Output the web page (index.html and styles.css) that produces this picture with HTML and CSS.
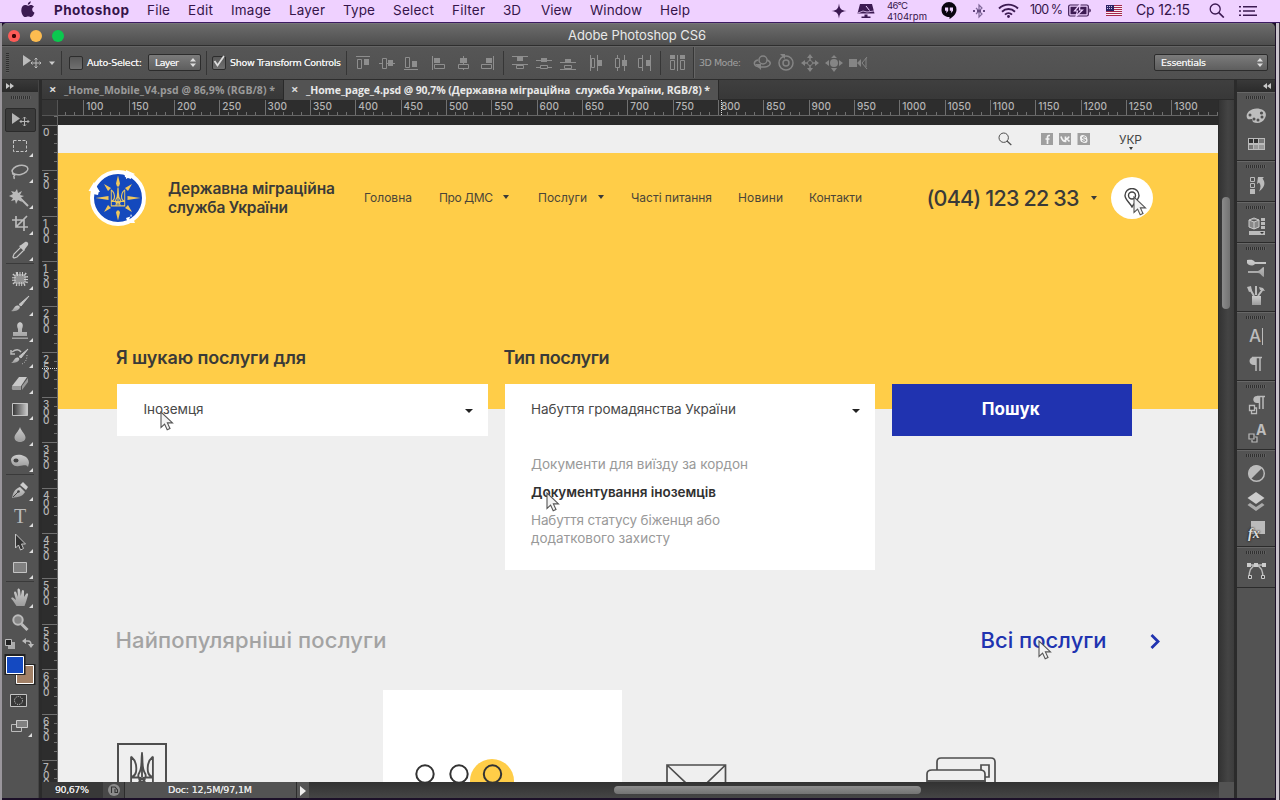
FILE: index.html
```html
<!DOCTYPE html>
<html lang="uk">
<head>
<meta charset="utf-8">
<title>Adobe Photoshop CS6</title>
<link rel="stylesheet" href="styles.css">
</head>
<body>
<svg class="defs" width="0" height="0">
  <defs>
    <linearGradient id="metal" x1="0" y1="0" x2="0" y2="1"><stop offset="0" stop-color="#cdcdcd"/><stop offset="1" stop-color="#9c9c9c"/></linearGradient>
    <linearGradient id="fade" x1="0" y1="0" x2="1" y2="0"><stop offset="0" stop-color="#333"/><stop offset="1" stop-color="#ccc"/></linearGradient>
    <symbol id="pointer" viewBox="0 0 14 20"><path d="M1 1v15.500l3.600-3.400 2.600 5.600 2.800-1.200-2.600-5.600h5.100z" fill="#f3f3f3" stroke="#555" stroke-width="1.100"/></symbol>
    <symbol id="more" viewBox="0 0 4 4"><path d="M4 0v4H0z" fill="#ddd"/></symbol>
    <symbol id="trident" viewBox="0 0 22 30">
      <path d="M11 1v20M1 4.500v23.500h20V4.500M1 4.500c4 3 5.500 7 4.500 12.500-.4 2-1.500 3-3.500 4M21 4.500c-4 3-5.500 7-4.500 12.500.4 2 1.500 3 3.500 4M11 2c-1 8 .5 12-3 16.500-1 2 0 5 3 7 3-2 4-5 3-7C10.500 14 12 10 11 2M1 21.500h6c4 0 7 2 7 6M21 21.500h-6c-4 0-7 2-7 6" fill="none" stroke="currentColor" stroke-width="1.700"/>
    </symbol>
  </defs>
</svg>

<nav class="menubar">
  <svg class="apple" width="14" height="17" viewBox="0 0 14 17"><path d="M9.800.300c.1 1.700-1.400 3.500-3 3.500-.2-1.700 1.400-3.300 3-3.500zM7 4.800c.7 0 1.600-.8 3-.8 1 0 2.200.5 3 1.600-2.600 1.600-2.200 5 .5 6.100-.5 1.400-1.800 4.300-3.500 4.300-1 0-1.500-.6-2.800-.6s-1.800.6-2.800.6C2 16 .3 12.300.3 9.200.3 6 2.300 4.100 4.200 4.100c1.200 0 2.100.7 2.800.7z"/></svg>
  <b data-w="75">Photoshop</b><span data-w="23">File</span><span data-w="25">Edit</span><span data-w="40">Image</span><span data-w="36">Layer</span><span data-w="32">Type</span><span data-w="41">Select</span><span data-w="33">Filter</span><span data-w="18">3D</span><span data-w="31">View</span><span data-w="52">Window</span><span data-w="30">Help</span>
  <svg width="16" height="16" viewBox="0 0 16 16"><path d="M8 .5C8.800 6 10 7.200 15.500 8 10 8.800 8.800 10 8 15.500 7.200 10 6 8.800.5 8 6 7.200 7.200 6 8 .5z"/></svg>
  <svg width="18" height="16" viewBox="0 0 18 16"><path d="M3 1h12l2.500 9.500H.5zM7.500 11.500h3v2h3V15h-9v-1.500h3z"/><path d="M9 3l3.500 4.500" stroke="#efd1ff"/><path d="M1 10l5-2 4 1 7-1" fill="none" stroke="#efd1ff" stroke-width=".8"/></svg>
  <div class="temp"><span data-w="21">46°C</span><span data-w="40">4104rpm</span></div>
  <svg width="16" height="19" viewBox="0 0 16 19"><path fill="#0a0510" d="M8 1a7.500 7.500 0 0 1 7.500 7.700c0 4-3.500 7.300-7 9.300v-2C3.500 16 .5 13 .5 8.700A7.500 7.500 0 0 1 8 1z"/><path fill="#efd1ff" d="M4 6.500h3.200v3.200L5.800 11.500H5l.7-1.700H4zM8.800 6.500H12v3.200l-1.400 1.800h-.8l.7-1.700H8.800z"/></svg>
  <svg width="12" height="16" viewBox="0 0 12 16"><path d="M3 5l6 6-3 3V2l3 3-6 6" fill="none" stroke="#80689a" stroke-width="1.200"/><path fill="#65487f" d="M0 7h2v2H0zM4 7h4v2H4zM10 7h2v2h-2z"/></svg>
  <svg width="21" height="15" viewBox="0 0 21 15"><g fill="none" stroke="#3c1a52" stroke-width="1.900"><path d="M1 5.500a13.500 13.500 0 0 1 19 0M4 8.700a9.300 9.300 0 0 1 13 0M7 11.600a5 5 0 0 1 7 0"/></g><circle cx="10.500" cy="13.500" r="1.400"/></svg>
  <span class="charge" data-w="33">100 %</span>
  <svg width="24" height="13" viewBox="0 0 24 13"><rect x=".7" y="1" width="19.600" height="11" rx="1.500" fill="none" stroke="#3c1a52" stroke-width="1.200"/><path d="M2.500 2.800h16v7.500h-16zM21.300 4.500c2 .5 2 3.500 0 4z"/><path d="M12 .5L6.500 7h3L8 12.500 14.500 6h-3z" stroke="#efd1ff" stroke-width="1.200"/></svg>
  <svg width="16" height="11" viewBox="0 0 16 11"><path fill="#f6eef6" d="M0 0h16v11H0z"/><path stroke="#a6274d" stroke-width="1" d="M0 .5h16M0 2.500h16M0 4.500h16M0 6.500h16M0 8.500h16M0 10.500h16"/><path fill="#2b2264" d="M0 0h8v6H0z"/><path stroke="#c9c0e0" stroke-dasharray="1 1" d="M1 1.500h6M1 3.500h6"/></svg>
  <span class="clock" data-w="54">Ср 12:15</span>
  <svg width="16" height="15" viewBox="0 0 16 15"><g fill="none" stroke="#3c1a52" stroke-width="1.300"><circle cx="6.200" cy="6" r="5"/><path d="M9.800 9.700l5 4.800" stroke-width="1.700"/></g></svg>
  <svg width="19" height="12" viewBox="0 0 19 12"><path d="M0 1h2v1.600H0zM4 1h14v1.600H4zM0 5.200h2v1.600H0zM4 5.200h12v1.600H4zM0 9.400h2V11H0zM4 9.400h14V11H4z"/></svg>
</nav>

<div class="desktop">
<div class="window">
  <header class="titlebar">
    <div class="lights"><i class="red"></i><i class="amber"></i><i class="green"></i></div>
    <span data-w="138">Adobe Photoshop CS6</span>
  </header>

  <section class="options">
    <i class="vgrip"></i>
    <svg class="movetool" width="34" height="20" viewBox="0 0 34 20"><path d="M1 2v11l8-5.500z" fill="#bbb"/><path d="M14 5v10M9 10h10M12.500 6.500L14 5l1.500 1.500M12.500 13.500L14 15l1.500-1.500M10.500 8.500L9 10l1.500 1.500M17.500 8.500L19 10l-1.500 1.500" fill="none" stroke="#bbb"/><path d="M27 8.500h6l-3 3.500z" fill="#ccc"/></svg>
    <i class="sep"></i>
    <i class="check"></i><span class="lbl auto" data-w="55">Auto-Select:</span>
    <span class="select layer"><span data-w="24">Layer</span><svg width="6" height="9" viewBox="0 0 6 9"><path d="M3 0l3 3.500H0zM3 9L0 5.500h6z" fill="#ddd"/></svg></span>
    <i class="sep s2"></i>
    <i class="check"><svg width="14" height="14" viewBox="0 0 14 14"><path d="M2.500 6l3 4.500L12 1" fill="none" stroke="#ddd" stroke-width="1.800"/></svg></i><span class="lbl show" data-w="111">Show Transform Controls</span>
    <i class="sep s3"></i>
    <svg class="align" width="72" height="24" viewBox="0 0 72 24"><g fill="none" stroke="#8e8e8e"><path d="M5 5.500h14M28 12.500h16M53 18.500h14"/><path d="M6.500 8.500h4v9h-4zM31.500 7.500h4v10h-4zM54.500 6.500h4v10h-4z" fill="#505050"/></g><path fill="#8e8e8e" d="M13 8h5v6h-5zM37 9h5v6h-5zM61 10h5v6h-5z"/></svg>
    <svg class="align a2" width="74" height="24" viewBox="0 0 74 24"><g fill="none" stroke="#8e8e8e"><path d="M6.500 5v14M37.500 5v14M67.500 5v14"/><path d="M8.500 13.500h10v4h-10zM32.500 13.500h10v4h-10zM55.500 13.500h10v4h-10z" fill="#505050"/></g><path fill="#8e8e8e" d="M8 7h6v5H8zM34 7h7v5h-7zM60 7h6v5h-6z"/></svg>
    <i class="sep s4"></i>
    <svg class="align a3" width="72" height="24" viewBox="0 0 72 24"><g fill="none" stroke="#8e8e8e"><path d="M4 5.500h16M4 13.500h16M28 9.500h16M28 16.500h16M52 11.500h16M52 18.500h16"/><path d="M8.500 14.500h7v3h-7zM32.500 14.500h7v3h-7zM56.500 14.500h7v3h-7z" fill="#505050"/></g><path fill="#8e8e8e" d="M9 6h6v4H9zM33 7h6v4h-6zM57 8h6v4h-6z"/></svg>
    <svg class="align a4" width="72" height="24" viewBox="0 0 72 24"><g fill="none" stroke="#8e8e8e"><path d="M6.500 4v16M13.500 4v16M33.500 4v16M40.500 4v16M58.500 4v16M66.500 4v16"/><path d="M7.500 7.500h3v9h-3zM31.500 7.500h4v9h-4zM54.500 7.500h4v9h-4z" fill="#505050"/></g><path fill="#8e8e8e" d="M14 9h4v6h-4zM38 9h5v6h-5zM62 9h4v6h-4z"/></svg>
    <i class="sep s4"></i>
    <svg class="align a3" width="24" height="24" viewBox="0 0 24 24"><path d="M12.500 4v16M5.500 9.500h4v9h-4zM15.500 9.500h4v9h-4z" fill="none" stroke="#8e8e8e"/><path fill="#8e8e8e" d="M5 4h5v4H5zM15 4h5v4h-5z"/></svg>
    <i class="sep s5"></i>
    <span class="mode" data-w="42">3D Mode:</span>
    <svg class="three" width="120" height="24" viewBox="0 0 120 24"><g fill="none" stroke="#858585" stroke-width="1.500"><circle cx="13" cy="9" r="4"/><path d="M8 9c-5 1-5 6 1 7h6c6-1 7-5 2-7"/><circle cx="36" cy="12" r="7"/><circle cx="36" cy="12" r="3"/><path d="M60 5v14M53 12h14"/></g><g fill="#858585"><path d="M5 13h6v6zM30 3h5v5zM57 7l3-4 3 4zM57 17l3 4 3-4zM55 9l-4 3 4 3zM65 9l4 3-4 3z"/><circle cx="84" cy="12" r="4"/><path d="M81 7l3-3 3 3zM81 17l3 4 3-4zM79 9l-4 3 4 3zM89 9l4 3-4 3zM99 8h8v8h-8zM107 12l4-4v8z"/></g><circle cx="60" cy="12" r="2.500" fill="#505050" stroke="#858585"/><path d="M117 6l-5 6 5 6M116 7v9" fill="none" stroke="#858585"/></svg>
    <span class="select essentials"><span data-w="45">Essentials</span><svg width="6" height="9" viewBox="0 0 6 9"><path d="M3 0l3 3.500H0zM3 9L0 5.500h6z" fill="#ddd"/></svg></span>
  </section>

  <div class="work">
    <aside class="tools">
      <div class="phead"><svg width="8" height="6" viewBox="0 0 8 6"><path d="M0 0l4 3-4 3zM4 0l4 3-4 3z" fill="#c8c8c8"/></svg></div>
      <i class="hgrip"></i>
      <div class="tool active"><svg width="31" height="24" viewBox="0 0 31 24"><path d="M7 5v11l8-5.500z" fill="#b5b5b5"/><path d="M19.500 9v9M15 13.500h9M18 10.500L19.500 9l1.500 1.500M18 16.500l1.500 1.500 1.500-1.500M16.500 12L15 13.500l1.500 1.500M22.500 12l1.500 1.500-1.500 1.500" fill="none" stroke="#b5b5b5"/></svg></div>
      <div class="group">
        <svg class="tool" viewBox="0 0 38 26"><path d="M11.500 7.500h13v11h-13z" fill="none" stroke="#c4c4c4" stroke-dasharray="3 1.500"/><use href="#more" x="27" y="20" width="4" height="4"/></svg>
        <svg class="tool" viewBox="0 0 38 26"><ellipse cx="18" cy="11" rx="8" ry="4.500" transform="rotate(-12 18 11)" fill="none" stroke="#b8b8b8" stroke-width="1.500"/><path d="M11 14c-2 2 4 1 1 3-1 1 1 1 0 3" fill="none" stroke="#b8b8b8" stroke-width="1.500"/><use href="#more" x="27" y="20" width="4" height="4"/></svg>
        <svg class="tool" viewBox="0 0 38 26"><path d="M15 4l1 4 4-2-2 4 4 1-4 2 2 4-4-2-2 4-1-4-4 1 2-3-4-2 4-2-2-3 4 1z" fill="#bbb"/><path d="M17 12l9 9" stroke="#bbb" stroke-width="2"/><use href="#more" x="27" y="20" width="4" height="4"/></svg>
        <svg class="tool" viewBox="0 0 38 26"><path d="M10 9h12v11M14 5v11h12M14 16l11-11" fill="none" stroke="#bbb" stroke-width="1.700"/><use href="#more" x="27" y="20" width="4" height="4"/></svg>
        <svg class="tool" viewBox="0 0 38 26"><path d="M11 20l1-3 7-7 3 3-7 7-3 1z" fill="none" stroke="#c4c4c4" stroke-width="1.200"/><path d="M17 9l5 5 1-2 3-4c1-2-1-4-3-3l-4 3z" fill="#c4c4c4"/><use href="#more" x="27" y="20" width="4" height="4"/></svg>
      </div>
      <div class="group">
        <svg class="tool" viewBox="0 0 38 26"><rect x="12" y="8" width="12" height="10" rx="3" fill="#909090"/><rect x="12" y="8" width="12" height="10" rx="3" fill="none" stroke="#ccc" stroke-width="4" stroke-dasharray="1 1.500"/><use href="#more" x="27" y="20" width="4" height="4"/></svg>
        <svg class="tool" viewBox="0 0 38 26"><path d="M27 4l-8 10-2-1.500z" fill="#c4c4c4" stroke="#c4c4c4"/><path d="M9 19c3-1 3-6 7-5.500 2 .5 2.500 2 1 3.500-2 2-5 2.500-8 2z" fill="url(#metal)"/><use href="#more" x="27" y="20" width="4" height="4"/></svg>
        <svg class="tool" viewBox="0 0 38 26"><path d="M16 11c-4-9 8-9 4 0v3h5v4H11v-4h5zM10 19.500h16V21H10z" fill="url(#metal)"/><use href="#more" x="27" y="20" width="4" height="4"/></svg>
        <svg class="tool" viewBox="0 0 38 26"><path d="M10 8c4-3 7-3 9 0M9 6v4h4" fill="none" stroke="#bbb" stroke-width="1.500"/><path d="M26 5l-7 9-2-1.500z" stroke="#c4c4c4" fill="#c4c4c4"/><path d="M9 19c3-1 3-6 7-5.500 3 1 1 6-7 5.500z" fill="url(#metal)"/><path d="M25 11c0 4-1 7-5 9" fill="none" stroke="#bbb" stroke-dasharray="1 1.500"/><use href="#more" x="27" y="20" width="4" height="4"/></svg>
        <svg class="tool" viewBox="0 0 38 26"><path d="M10 16l7-9h8l-6 9z" fill="#c9c9c9"/><path d="M10 16h9v4h-7c-3 0-2-2-2-4zM20 16l6-8v4l-6 8z" fill="#999"/><use href="#more" x="27" y="20" width="4" height="4"/></svg>
        <svg class="tool" viewBox="0 0 38 26"><path d="M10.500 7.500h15v12h-15z" fill="url(#fade)" stroke="#c4c4c4"/><use href="#more" x="27" y="20" width="4" height="4"/></svg>
        <svg class="tool" viewBox="0 0 38 26"><path d="M18 5c1 4 5.500 7 5.500 10.500 0 6-11 6-11 0C12.500 12 17 9 18 5z" fill="url(#metal)"/><use href="#more" x="27" y="20" width="4" height="4"/></svg>
        <svg class="tool" viewBox="0 0 38 26"><path d="M9 11c2-5 9-5 13-3 3 1 5 4 5 7l-1 4c-3-3-4-1-9-1-5 1-8-2-8-7z" fill="url(#metal)"/><ellipse cx="14" cy="12.500" rx="2.500" ry="2" fill="#444"/><use href="#more" x="27" y="20" width="4" height="4"/></svg>
      </div>
      <div class="group">
        <svg class="tool" viewBox="0 0 38 26"><path d="M10 21c1-6 3-9 8-11l5 5c-2 4-6 5-13 6z" fill="url(#metal)"/><path d="M18 8l3-3 5 5-2 3z" fill="#ccc"/><path d="M11 20l5-5" stroke="#444"/><circle cx="16.500" cy="14.500" r="1.300" fill="#444"/><use href="#more" x="27" y="20" width="4" height="4"/></svg>
        <div class="tool type"><b>T</b><svg viewBox="0 0 4 4"><use href="#more" width="4" height="4"/></svg></div>
        <svg class="tool" viewBox="0 0 38 26"><path d="M13.500 5v14l3-3 2 5 3-1.500-2-4.500h4z" fill="#333" stroke="#c4c4c4"/><use href="#more" x="27" y="20" width="4" height="4"/></svg>
        <svg class="tool" viewBox="0 0 38 26"><path d="M11.500 7.500h13v10h-13z" fill="#808080" stroke="#c4c4c4"/><use href="#more" x="27" y="20" width="4" height="4"/></svg>
      </div>
      <div class="group">
        <svg class="tool" viewBox="0 0 38 26"><path d="M14.500 22c-2-3-3-5-5-7-1-1 1-2 2-1l2.500 2-2-7c0-2 2-2 2.500 0l1.500 4-.5-7c0-2 2-2 2.500 0l.8 6 1-5c.5-2 2.500-1 2.200.5L22 13l2-3c1-1.500 2.500-.5 2 1-1 4-2 7-3.500 11z" fill="url(#metal)"/><use href="#more" x="27" y="20" width="4" height="4"/></svg>
        <svg class="tool" viewBox="0 0 38 26"><circle cx="16" cy="10" r="4.700" fill="#858585" stroke="#bbb" stroke-width="2"/><path d="M19.500 14l6 6" stroke="#bbb" stroke-width="3"/></svg>
      </div>
      <svg class="swatches" width="38" height="106" viewBox="0 0 38 106">
        <path d="M6 5h7v7H6z" fill="#aaa"/><path d="M3.500 2.500h6v6h-6z" fill="#222" stroke="#bbb"/>
        <path d="M23 4h3q3 0 3 4" fill="none" stroke="#bbb" stroke-width="1.500"/><path d="M24 1l-4 3 4 3zM26 7h6l-3 4z" fill="#bbb"/>
        <path d="M15 28.500h17v18H15z" fill="#a28167" stroke="#222" stroke-width="3"/><path d="M14.500 28.500h17v18h-17z" fill="#a28167" stroke="#fff"/>
        <path d="M4 18.500h18v18H4z" fill="#1449c1" stroke="#222" stroke-width="3"/><path d="M4.500 19.500h17v17h-17z" fill="#1449c1" stroke="#fff"/>
        <path d="M8.500 57.500h16v12h-16z" fill="#383838" stroke="#c4c4c4"/><circle cx="16.500" cy="63.500" r="4" fill="none" stroke="#ddd" stroke-dasharray="1 1.200"/>
        <path d="M9.500 87.500h10v7h-10z" fill="#555" stroke="#bbb"/><path d="M14.500 83.500h11v7h-11z" fill="#808080" stroke="#ccc"/><path d="M30 96v4h-4z" fill="#ddd"/>
      </svg>
    </aside>

    <main class="doc">
      <div class="tabs">
        <div class="tab"><i>×</i><span data-w="211">_Home_Mobile_V4.psd @ 86,9% (RGB/8) *</span></div>
        <div class="tab current"><i>×</i><span data-w="404">_Home_page_4.psd @ 90,7% (Державна міграційна&nbsp; служба України, RGB/8) *</span></div>
      </div>
      <div class="view">
        <div class="corner"></div>
        <div class="ruler-h"></div>
        <div class="vscroll"><i></i></div>
        <div class="ruler-v"></div>
        <div class="artboard">
          <div class="page">
            <div class="utility">
              <svg width="14" height="14" viewBox="0 0 14 14"><g fill="none" stroke="#4e4e4e"><circle cx="5.700" cy="5.700" r="4.700"/><path d="M9 9l4.300 4" stroke-width="1.200"/></g></svg>
              <svg width="50" height="12" viewBox="0 0 50 12"><path d="M0 0h12v12H0zM18 0h12v12H18zM36.500 0h12.500v12H36.500z" fill="#9f9f9f"/><path d="M9 2.500H8c-1.200 0-1.500.5-1.500 2V11M4.500 6h4M20 3.500c1 3.500 2.500 5 4.500 5v-5M28 3.500c-.5 1.500-1.500 2.500-3.500 2.500 2 0 3 1 4 2.500" fill="none" stroke="#f3f3f3" stroke-width="1.700"/><circle cx="41.500" cy="4.500" r="2.500" fill="#f3f3f3"/><circle cx="44" cy="7.500" r="2.500" fill="#f3f3f3"/><circle cx="42.700" cy="6" r="3.500" fill="#f3f3f3"/><path d="M44.700 4.500c-2-1.500-4 0-3 1s3 .5 3 1.700c0 1.300-2.500 1.300-3.500.3" fill="none" stroke="#8a8a8a"/></svg>
              <div class="lang"><span data-w="23">УКР</span><i class="caret tiny"></i></div>
            </div>
            <div class="head">
              <svg class="emblem" width="60" height="60" viewBox="0 0 60 60">
                <circle cx="30" cy="30" r="26" fill="#1449bd" stroke="#fff" stroke-width="4"/><path d="M.5 23l5.500-9 6 10zM38 2l9 4-9 5zM40 55l7 0-4-9zM6 20l5 3-1 4-5-1zM36 4l8 3-1 4-6-2zM38 50l6-2 1 5-5 2z" fill="#fff"/>
                <path d="M30 7.500l2 8-1 3h-2l-1-3zM30 52.500l2-8-1-2h-2l-1 2zM7.500 30l13-2v4zM52.500 30l-13-2v4zM16 16l7 4-3 3zM44 16l-4 7-3-3zM16 44l4-7 3 3zM44 44l-7-4 3-3z" fill="#f0c75c"/>
                <svg x="22.500" y="17" width="15" height="24" viewBox="0 0 22 30" color="#eac862"><use href="#trident"/></svg>
              </svg>
              <h1><span data-w="167">Державна міграційна</span><br><span data-w="120">служба України</span></h1>
              <nav class="sitenav">
                <a data-w="48">Головна</a><a data-w="54">Про ДМС</a><i class="caret"></i><a data-w="49">Послуги</a><i class="caret"></i><a data-w="81">Часті питання</a><a data-w="45">Новини</a><a data-w="53">Контакти</a>
              </nav>
              <strong class="phone" data-w="153">(044) 123 22 33</strong><i class="caret"></i>
              <div class="pin"><svg width="16" height="20" viewBox="0 0 16 20"><g fill="none" stroke="#444" stroke-width="1.400"><path d="M8 19C6 15 1 11.500 1 7.500a7 7 0 0 1 14 0C15 11.500 10 15 8 19z"/><circle cx="8" cy="7.500" r="3.500"/></g></svg></div>
            </div>
            <div class="search">
              <div><h2><span data-w="190">Я шукаю послуги для</span></h2><div class="field"><span data-w="60">Іноземця</span><i class="caret big"></i></div></div>
              <div><h2><span data-w="106">Тип послуги</span></h2><div class="field open"><span data-w="205">Набуття громадянства України</span><i class="caret big"></i></div>
                <ul><li><span data-w="217">Документи для виїзду за кордон</span></li><li class="on"><span data-w="185">Документування іноземців</span></li><li><span data-w="189">Набуття статусу біженця або</span><br><span data-w="139">додаткового захисту</span></li></ul></div>
              <button><span data-w="58">Пошук</span></button>
            </div>
            <div class="popular"><span data-w="271">Найпопулярніші послуги</span><a data-w="126">Всі послуги</a><svg width="10" height="15" viewBox="0 0 10 15"><path d="M1.500 1l6.500 6.500L1.500 14" fill="none" stroke="#2033b0" stroke-width="2.800"/></svg></div>
            <div class="cards">
              <svg width="240" height="92" viewBox="0 0 240 92"><path d="M1 54h48v50H1z" fill="none" stroke="#4e4e4e" stroke-width="2"/><svg x="13" y="61" width="24" height="37" viewBox="0 0 22 30" color="#4e4e4e" preserveAspectRatio="none"><use href="#trident"/></svg></svg>
              <svg class="white" width="239" height="92" viewBox="0 0 239 92"><circle cx="109" cy="91" r="22" fill="#ffcd48"/><g fill="none" stroke="#333" stroke-width="2"><circle cx="42" cy="84" r="8.700"/><circle cx="76" cy="84" r="8.700"/><circle cx="109.500" cy="84" r="8.700"/></g></svg>
              <svg width="62" height="92" viewBox="0 0 62 92"><path d="M1 75h58.500v30H1zM1 75l29.500 28L59.500 75" fill="none" stroke="#4e4e4e" stroke-width="1.700"/></svg>
              <svg width="72" height="92" viewBox="0 0 72 92"><path d="M11 81V72q0-4 4-4h50q4 0 4 4v32" fill="none" stroke="#4e4e4e" stroke-width="1.700"/><path d="M55 75h8v12h-8z" fill="none" stroke="#4e4e4e" stroke-width="1.700"/><path d="M1 104V84q0-4 5-4h48q5 0 5 4v20" fill="#efefef" stroke="#4e4e4e" stroke-width="1.700"/><path d="M1 90h58.500v5H1z" fill="#4e4e4e"/></svg>
            </div>
            <svg class="cursor c1"><use href="#pointer"/></svg><svg class="cursor c2"><use href="#pointer"/></svg><svg class="cursor c3"><use href="#pointer"/></svg><svg class="cursor c4"><use href="#pointer"/></svg>
          </div>
        </div>
      </div>
      <footer class="status">
        <span class="zoom"><span data-w="34">90,67%</span></span>
        <span class="sicon"><svg width="12" height="12" viewBox="0 0 12 12"><circle cx="6" cy="6" r="6" fill="#8d8d8d"/><path d="M3.500 9V3H7l2.500 3v2.500H7V5" fill="none" stroke="#333" stroke-width="1.100"/></svg></span>
        <span class="size"><span data-w="84">Doc: 12,5M/97,1M</span></span>
        <span class="arrow"><svg width="6" height="10" viewBox="0 0 6 10"><path d="M0 0l6 5-6 5z" fill="#eee"/></svg></span>
        <span class="hscroll"><i></i></span><span class="nook"></span>
      </footer>
    </main>

    <aside class="panels">
      <div class="phead"><svg width="8" height="6" viewBox="0 0 8 6"><path d="M4 0L0 3l4 3zM8 0L4 3l4 3z" fill="#c8c8c8"/></svg></div>
      <div class="pgroup"><i class="hgrip"></i>
        <svg viewBox="0 0 37 28"><path d="M10 16c-2-6 6-11 13-9 6 1 7 6 5 9-2 5-8 6-12 4-1-2 0-3-2-3-1 0-3 1-4-1z" fill="#bdbdbd"/><g fill="#505050"><circle cx="13" cy="13" r="1.500"/><circle cx="17" cy="17" r="1.500"/><circle cx="24.500" cy="11" r="1.600"/><circle cx="25" cy="15" r="1.500"/><circle cx="21" cy="18" r="1.500"/></g></svg>
        <svg viewBox="0 0 37 28"><path d="M11 8h17v12H11z" fill="#bbb"/><path d="M12 9h4v4h-4zM17 9h4v4h-4z" fill="#333"/><path d="M22 9h5v4h-5zM12 15h4v4h-4z" fill="#777"/><path d="M17 15h4v4h-4zM22 15h5v4h-5z" fill="#999"/></svg></div>
      <div class="pgroup"><i class="hgrip"></i><svg viewBox="0 0 37 28"><path d="M13.500 6.500h4v4h-4zM13.500 12.500h4v4h-4z" fill="none" stroke="#bbb"/><path d="M13 18h5v5h-5zM21 6h6l-1.500 1.500c3 4 3 8-3.500 13 2-4 2-7 0-9L20 13z" fill="#bbb"/></svg></div>
      <div class="pgroup"><i class="hgrip"></i><svg viewBox="0 0 37 28"><path d="M17 6l5 2v7l-5 2-5-2V8zM12 8l5 2 5-2M17 10v7" fill="#888" stroke="#ccc"/><path d="M24 6h4v3h-4zM24 10h4v3h-4zM24 14h4v3h-4zM12 19h16v4H12z" fill="#bbb"/><path d="M23 20h4l-2 2z" fill="#333"/></svg></div>
      <div class="pgroup"><i class="hgrip"></i>
        <svg viewBox="0 0 37 28"><path d="M10 7c4 0 5-1 8 2h11v2H18c-3 3-7 1-8-1zM11 18h10c3-1 4-4 6-4v10c-3-1-3-4-6-4H11z" fill="url(#metal)"/></svg>
        <svg viewBox="0 0 37 28"><path d="M15 15h9v9h-9z" fill="url(#metal)"/><path d="M17 15l-4-7M19 14V5M21 15l5-7" stroke="#bbb" stroke-width="2"/><path d="M10 6l4-1 1 5-3 1zM22 6l4 1 2 3-5-1z" fill="#bbb"/></svg></div>
      <div class="pgroup"><i class="hgrip"></i>
        <div class="glyph"><b>A</b><i></i></div>
        <svg viewBox="0 0 37 28"><path d="M23 7v14M19 7v14M15 7.500h10" stroke="#bbb" stroke-width="1.500" fill="none"/><path d="M19 7h-2c-6 0-6 8 0 8h2z" fill="#bbb"/></svg></div>
      <div class="pgroup"><i class="hgrip"></i>
        <svg viewBox="0 0 37 28"><path d="M26 5v13M22.500 5v13M20 5.500h8" stroke="#bbb" stroke-width="1.500"/><path d="M22 5h-2c-5 0-5 7 0 7h2z" fill="#bbb"/><path d="M12.500 14.500h5v5h-5zM17.500 17h2v5.500h-5V20" fill="#444" stroke="#bbb" stroke-width="1.300"/></svg>
        <div class="glyph small"><svg viewBox="0 0 10 10"><path d="M1 1h5v5H1zM7 4h2v5H4V7" fill="#444" stroke="#bbb" stroke-width="1.200"/></svg><b>A</b></div></div>
      <div class="pgroup"><i class="hgrip"></i>
        <svg viewBox="0 0 37 28"><circle cx="19.500" cy="13.500" r="7.800" fill="#555" stroke="#bbb" stroke-width="1.500"/><path d="M25 8a7.800 7.800 0 1 0-11 11z" fill="#bbb"/></svg>
        <svg viewBox="0 0 37 28"><path d="M10.500 17l8.500 6 8.500-6-2.500-2-6 4-6-4z" fill="#aaa"/><path d="M19 4l8.500 6-8.500 6-8.500-6z" fill="#ccc"/></svg>
        <div class="glyph fx"><i></i><b>fx</b></div></div>
      <div class="pgroup"><i class="hgrip"></i><svg viewBox="0 0 37 28"><path d="M11 8h16M12 21c0-8 3-12 7-13 4 1 7 5 7 13" fill="none" stroke="#bbb" stroke-width="1.300"/><path d="M10 6h4v4h-4zM17 6h4v4h-4zM25 6h4v4h-4z" fill="#ccc"/><path d="M11.500 18.500h3v3h-3zM24.500 18.500h3v3h-3z" fill="#444" stroke="#ccc"/></svg></div>
      <div class="rest"></div>
    </aside>
  </div>
</div>
</div>
<script src="app.js"></script>
</body>
</html>
```
FILE: styles.css
```css
* { box-sizing: border-box; }
body { margin: 0; width: 1280px; height: 800px; overflow: hidden; font-family: Inter, "Liberation Sans", sans-serif; display: flex; flex-direction: column; background: #1c1028; }
svg { display: block; flex: none; }
i { font-style: normal; display: block; flex: none; }
[data-w] { white-space: nowrap; }
.defs { position: absolute; }

/* System menu bar */
.menubar { height: 23px; flex: none; background: #efd1ff; border-bottom: 1px solid #3c1a63; padding-left: 21px; display: grid; grid-template-rows: 22px; align-items: center; justify-items: start; color: #35144a; fill: #3c1a52; font-size: 13.500px; line-height: 20px;
  grid-template-columns: 33px 93px 41px 43px 58px 54px 50px 59px 51px 38px 49px 70px 171px 26px 30px 54px 32px 25px 32px 38px 38px 30px 73px 30px 19px; }
.menubar > span, .menubar > b { margin-top: -3px; }
.menubar > svg { margin-top: -1px; }
.menubar .apple { margin-top: -3px; }
.temp { font-size: 9.500px; line-height: 11.500px; display: flex; flex-direction: column; }
.charge { font-size: 12.500px; }
.clock { font-size: 14px; }

/* Window frame */
.desktop { flex: 1; padding: 0 5px 2px 2px; background: linear-gradient(to right, #9a969c 0 2px, #1c1028 2px 1276px, #c9c3cc 1276px 1279px, #3a3340 1279px); }
.window { height: 775px; background: #535353; border-radius: 5px 5px 0 0; display: flex; flex-direction: column; overflow: hidden; }
.titlebar { height: 23px; flex: none; background: linear-gradient(#6c6c6c, #4e4e4e); border-bottom: 1px solid #2e2e2e; border-top: 1px solid #777; display: flex; align-items: center; color: #e8e8e8; font-size: 13px; }
.titlebar > span { margin-left: 504px; padding-top: 1px; }
.lights { display: flex; gap: 10px; padding: 2px 0 0 6px; }
.lights i { width: 12px; height: 12px; border-radius: 50%; }
.red { background: radial-gradient(#3a0606 0 1.800px, #fc5b57 2.500px); }
.amber { background: #fdbc50; }
.green { background: #0bc84f; }

/* Options bar */
.options { height: 34px; flex: none; background: linear-gradient(#565656, #505050); border-top: 1px solid #656565; border-bottom: 1px solid #2d2d2d; padding-bottom: 1px; display: flex; align-items: center; font-family: "DejaVu Sans", sans-serif; font-size: 9.500px; color: #f0f0f0; text-shadow: 0 0 .6px #eee; }
.vgrip { width: 3px; height: 20px; margin-left: 4px; background: repeating-linear-gradient(#2f2f2f 0 1px, #5a5a5a 1px 2px); }
.movetool { margin-left: 13px; }
.sep { width: 1px; height: 24px; background: #363636; margin-left: 5px; }
.check { width: 14px; height: 14px; border: 1px solid #2d2d2d; border-radius: 2px; background: linear-gradient(#585858, #707070); margin-left: 7px; }
.s2 + .check { margin-left: 5px; }
.check svg { margin: -2px 0 0 -1px; }
.lbl { width: 61px; margin-left: 4px; }
.show { width: 111px; margin-left: 4px; }
.select { height: 17px; border: 1px solid #2c2c2c; border-radius: 2px; background: linear-gradient(#7b7b7b, #5e5e5e); display: flex; align-items: center; justify-content: space-between; padding: 0 4px 0 6px; }
.layer { width: 53px; }
.s3 { margin-left: 5px; }
.align { margin-left: 4px; }
.a2 { margin-left: 3px; }
.a2 + .sep { margin-left: 3px; }
.a4 + .sep { margin-left: 4px; }
.a4 { margin-left: 4px; }
.s5 { height: 31px; margin-left: 4px; border-right: 1px solid #666; width: 2px; }
.mode { width: 51px; margin-left: 4px; color: #a0a0a0; text-shadow: none; }
.essentials { width: 114px; margin-left: auto; margin-right: 7px; }

/* Work area */
.work { flex: 1; display: flex; background: #2b2b2b; min-height: 0; }
.tools { width: 37px; background: #535353; display: flex; flex-direction: column; flex: none; border-right: 1px solid #444; }
.phead { height: 12px; flex: none; background: linear-gradient(#393939, #2b2b2b); padding: 3px 4px; }
.hgrip { width: 20px; height: 3px; margin: 4px 0 0 9px; background: repeating-linear-gradient(to right, #303030 0 1px, #606060 1px 2px); }
.tool { width: 38px; height: 26px; }
.tool.active { width: 31px; height: 24px; margin: 9px 0 1px 3px; background: #3b3b3b; border: 1px solid #2b2b2b; border-radius: 2px; }
.active svg { margin: -1px; }
.group { border-bottom: 1px solid #3a3a3a; margin: 0 4px 2px; }
.group .tool { margin-left: -4px; }
.group:nth-last-child(2) { border-bottom-color: transparent; }
.type { display: flex; align-items: center; font-family: "Liberation Serif", serif; font-size: 20px; color: #bbb; padding-left: 12px; }
.type b { font-weight: 400; width: 15px; }
.type svg { width: 4px; height: 4px; margin-top: 18px; }
.swatches { margin-top: -2px; }

/* Document */
.doc { width: 1192px; margin-left: 3px; flex: none; display: flex; flex-direction: column; }
.tabs { height: 20px; flex: none; background: linear-gradient(#3f3f3f, #383838); border-bottom: 1px solid #2a2a2a; display: flex; font-family: "Open Sans", sans-serif; font-weight: 700; font-size: 10.500px; line-height: 20px; color: #999; }
.tab { width: 242px; display: flex; border-right: 1px solid #292929; padding-left: 7px; }
.tab i { width: 15px; color: #d8d8d8; font-size: 13px; font-weight: 700; line-height: 19px; }
.current { width: 435px; background: #535353; color: #e8e8e8; height: 20px; }
.view { display: grid; grid-template: 16px 666px / 16px 1160px 16px; flex: none; }
.corner { background: #353535; border: solid #555; border-width: 0 1px 1px 0; }
.ruler-h, .ruler-v { position: relative; overflow: hidden; display: flex; color: #b4b4b4; font-size: 10px; font-weight: 500; }
.ruler-h { padding-left: 25.300px; border-bottom: 1px solid #666; background: repeating-linear-gradient(to right, transparent 0 7.070px, #707070 7.070px 8.070px, transparent 8.070px 9.067px) 0 12px / 100% 3px no-repeat, #2d2d2d; }
.ruler-h span { width: 45.333px; flex: none; border-left: 1px solid #707070; padding-left: 2px; line-height: 12px; letter-spacing: .1px; }
.ruler-v { flex-direction: column; padding-top: 9px; border-right: 1px solid #666; background: repeating-linear-gradient(#707070 0 1px, transparent 1px 9.067px) 12px 0 / 3px 100% no-repeat, #2d2d2d; }
.ruler-v span { width: 16px; height: 45.333px; flex: none; border-top: 1px solid #707070; padding: 2px 7px 0 1px; line-height: 8px; word-break: break-all; }
/* pointer position markers */
.ruler-h::after { content: ""; position: absolute; left: 663px; top: 0; height: 15px; border-left: 1px dotted #ddd; }
.ruler-v::after { content: ""; position: absolute; top: 252px; left: 0; width: 15px; border-top: 1px dotted #ddd; }
.vscroll { grid-row: span 2; background: linear-gradient(to right, #333, #444 60%, #3c3c3c); padding: 97px 4px 0 3px; border-left: 1px solid #2b2b2b; }
.vscroll i { width: 8px; height: 112px; border-radius: 4px; background: linear-gradient(to right, #8b8b8b, #727272); }
.artboard { background: linear-gradient(#2a2a2a, #222); padding-top: 9px; overflow: hidden; }

/* Site mock-up */
.page { position: relative; height: 657px; overflow: hidden; background: linear-gradient(#efefef 28px, #ffcd48 28px 284px, #efefef 284px); color: #3a3a38; }
.utility { height: 28px; padding-left: 940px; display: flex; align-items: center; }
.utility svg + svg { margin-left: 29px; }
.lang { margin-left: 28px; width: 25px; font-size: 12px; line-height: 14px; display: flex; flex-direction: column; padding-top: 2px; color: #444; }
.caret { width: 0; height: 0; border: 3.500px solid transparent; border-top: 4px solid #3a3a38; border-bottom: 0; }
.tiny { border-width: 3px 2px 0; margin: 0 0 -2px 10px; }
.big { border-width: 4px 4px 0; border-top-color: #222; margin-top: 4px; }
.head { height: 89px; display: grid; align-items: center; justify-items: start; padding-left: 30px; grid-template-columns: 80px 196px 562.500px 164.500px 20px 43px; }
.head h1 { font-size: 15.500px; line-height: 19px; font-weight: 600; margin: 0; padding-top: 1px; }
.sitenav { display: grid; grid-template-columns: 75px 64px 35px 60px 33px 107px 71px 60px; align-items: center; font-size: 12px; font-weight: 400; color: #4b4538; padding-bottom: 1px; }
.phone { font-size: 21.500px; font-weight: 500; padding-top: 1px; }
.pin { width: 42px; height: 42px; border-radius: 50%; background: #fff; display: grid; place-items: center; }
.search { margin-top: 105px; padding-left: 59px; display: grid; grid-template-columns: 387.500px 387.500px 239.500px; align-items: start; height: 272px; }
h2 { font-size: 18px; line-height: 22px; font-weight: 600; margin: 0 0 15px -1px; }
.field { width: 370.500px; height: 52px; background: #fff; display: flex; align-items: center; justify-content: space-between; padding: 0 15px 3px 26.500px; font-size: 13.500px; font-weight: 400; color: #484848; }
.search ul { list-style: none; margin: 0; width: 370.500px; height: 134px; background: #fff; padding: 19px 26.500px; font-size: 13.500px; line-height: 18px; color: #999; font-weight: 400; }
.search li { margin-bottom: 10px; }
.search .on { color: #303030; font-weight: 600; }
.search button { margin-top: 37px; height: 52px; border: 0; padding: 0 2px 2px 0; background: #2033b0; color: #fff; font: 700 17px Inter, sans-serif; }
.popular { height: 71px; display: grid; grid-template-columns: 865px 169px 10px; padding: 5px 0 0 57.500px; font-size: 22px; line-height: 32px; font-weight: 500; color: #a3a3a3; }
.popular a { color: #2033b0; }
.popular svg { margin-top: 10px; }
.cards { display: grid; grid-template-columns: 266px 282.500px 260.500px 72px; padding-left: 59px; }
.white { background: #fff; }
.cursor { position: absolute; width: 14px; height: 20px; }
.c1 { left: 102px; top: 286px; }
.c2 { left: 488px; top: 367px; }
.c3 { left: 980px; top: 515px; }
.c4 { left: 1075px; top: 71px; }

/* Status bar */
.status { height: 16px; flex: none; display: flex; background: #383838; color: #e8e8e8; font: 9.500px/15px "DejaVu Sans", sans-serif; text-shadow: 0 0 .6px #eee; }
.zoom { width: 61px; padding-left: 13px; }
.sicon { width: 22px; background: #484848; padding: 2px 5px; border-right: 1px solid #2c2c2c; }
.size { width: 171px; background: #535353; padding-left: 43px; }
.arrow { width: 13px; background: #555; padding: 4px 3px; border-left: 1px solid #2c2c2c; }
.hscroll { flex: 1; background: linear-gradient(#323232, #454545); padding: 4px 0 0 305px; }
.hscroll i { width: 307px; height: 8px; border-radius: 4px; background: linear-gradient(#8d8d8d, #737373); }
.nook { width: 15px; background: #535353; }

/* Right panels */
.panels { width: 38px; margin-left: 3px; display: flex; flex-direction: column; background: #535353; flex: none; }
.panels .phead svg { margin-left: 22px; }
.pgroup { border-top: 1px solid #676767; border-bottom: 1px solid #2b2b2b; padding-bottom: 2px; flex: none; }
.pgroup .hgrip { margin: 3px 0 3px 9px; }
.pgroup > svg { width: 37px; height: 28px; }
.glyph { height: 28px; display: flex; align-items: center; color: #bdbdbd; font-size: 17px; padding-left: 12px; gap: 1px; }
.glyph b { font-weight: 500; }
.glyph i { width: 1px; height: 17px; background: #bbb; }
.small { gap: 0; padding-left: 11px; }
.small svg { width: 10px; height: 10px; margin-top: 9px; }
.small b { font-size: 14px; font-weight: 700; margin: -8px 0 0 -2px; }
.fx { display: grid; grid-template: 28px / 18px; padding-left: 11px; }
.fx i { grid-area: 1 / 1; width: 14px; height: 13px; margin: -5px 0 0 3px; background: #bbb; }
.fx b { grid-area: 1 / 1; font: italic 700 14px "Liberation Serif", serif; margin-top: 7px; color: #ddd; text-shadow: 0 0 2px #222, 0 0 2px #222; }
```
FILE: app.js
```js
// Rulers: one cell per 50 document units
function fillRuler(selector, from, to) {
  const ruler = document.querySelector(selector);
  for (let n = from; n <= to; n += 50) {
    const cell = document.createElement('span');
    cell.textContent = n;
    ruler.append(cell);
  }
}
fillRuler('.ruler-h', 100, 1300);
fillRuler('.ruler-v', 0, 700);

// Tracks each label so that it fills its measure
document.querySelectorAll('[data-w]').forEach((el) => {
  const range = document.createRange();
  range.selectNodeContents(el);
  const width = range.getBoundingClientRect().width;
  const gap = (Number(el.dataset.w) - width) / (el.textContent.length - 1);
  el.style.letterSpacing = gap.toFixed(3) + 'px';
});
```
